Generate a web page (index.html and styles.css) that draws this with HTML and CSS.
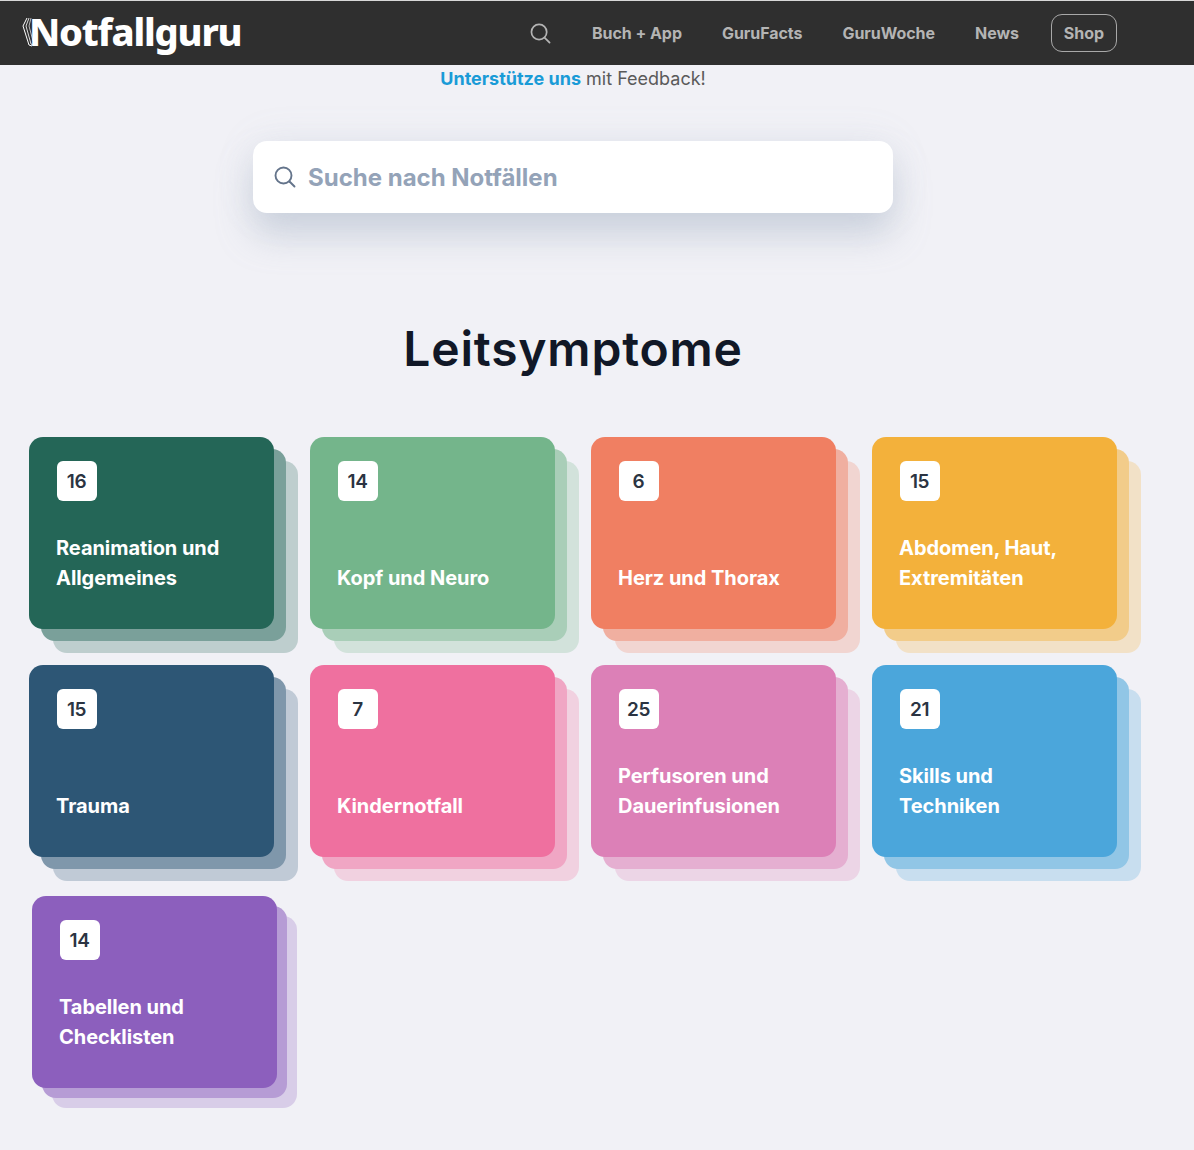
FILE: index.html
```html
<!DOCTYPE html>
<html lang="de">
<head>
    <meta charset="UTF-8">
    <meta name="viewport" content="width=device-width, initial-scale=1.0">
    <title>Notfallguru</title>
    <link rel="stylesheet" href="styles.css">
</head>
<body>
    <header class="topbar">
        <a class="logo" href="#">
            <svg class="logo-mark" width="12" height="30" viewBox="0 0 12 30">
                <path d="M5 1 L1 9 L7 28 L10 29" fill="none" stroke="#fff" stroke-width="1"/>
                <path d="M7 1 L4 9 L9 27 L11 28" fill="none" stroke="#ddd" stroke-width="1"/>
                <path d="M9 1 L7 9 L11 24" fill="none" stroke="#bbb" stroke-width="1"/>
            </svg>
            <span>Notfallguru</span>
        </a>
        <nav class="nav">
            <svg class="nav-search" width="21" height="21" viewBox="0 0 22 22" fill="none" stroke="#b4b4b4" stroke-width="1.8" stroke-linecap="round">
                <circle cx="9.5" cy="9.5" r="8"/>
                <path d="M15.5 15.5 L20.5 20.5"/>
            </svg>
            <a href="#">Buch + App</a>
            <a href="#">GuruFacts</a>
            <a href="#">GuruWoche</a>
            <a href="#">News</a>
            <a class="shop" href="#">Shop</a>
        </nav>
    </header>

    <main class="page">
        <p class="support"><a href="#">Unterstütze uns</a> mit Feedback!</p>

        <div class="search">
            <svg width="22" height="22" viewBox="0 0 22 22" fill="none" stroke="#64748b" stroke-width="1.9" stroke-linecap="round">
                <circle cx="9.5" cy="9.5" r="8"/>
                <path d="M15.5 15.5 L20.5 20.5"/>
            </svg>
            <span class="search-text">Suche nach Notfällen</span>
        </div>

        <h1>Leitsymptome</h1>

        <div class="cards">
            <a class="card green" href="#"><div class="face"><span class="count">16</span><span class="name">Reanimation und<br>Allgemeines</span></div></a>
            <a class="card mint" href="#"><div class="face"><span class="count">14</span><span class="name">Kopf und Neuro</span></div></a>
            <a class="card coral" href="#"><div class="face"><span class="count">6</span><span class="name">Herz und Thorax</span></div></a>
            <a class="card amber" href="#"><div class="face"><span class="count">15</span><span class="name">Abdomen, Haut,<br>Extremitäten</span></div></a>
            <a class="card navy" href="#"><div class="face"><span class="count">15</span><span class="name">Trauma</span></div></a>
            <a class="card pink" href="#"><div class="face"><span class="count">7</span><span class="name">Kindernotfall</span></div></a>
            <a class="card orchid" href="#"><div class="face"><span class="count">25</span><span class="name">Perfusoren und<br>Dauerinfusionen</span></div></a>
            <a class="card sky" href="#"><div class="face"><span class="count">21</span><span class="name">Skills und<br>Techniken</span></div></a>
            <a class="card purple last" href="#"><div class="face"><span class="count">14</span><span class="name">Tabellen und<br>Checklisten</span></div></a>
        </div>
    </main>
</body>
</html>
```

FILE: styles.css
```css
* {
    box-sizing: border-box;
}

body {
    font-family: "Inter", "Noto Sans", sans-serif;
    background-color: #f1f1f6;
    margin: 0;
    padding: 0;
}

a {
    text-decoration: none;
}

/* Kopfzeile */
.topbar {
    height: 65px;
    border-top: 1px solid #d8d8d8;
    background-color: #2f2f2f;
    display: flex;
    align-items: center;
    justify-content: space-between;
    padding: 0 77px 0 22px;
}

.logo {
    display: flex;
    align-items: center;
    color: white;
    font-family: "Noto Sans", sans-serif;
    font-size: 38px;
    font-weight: 800;
    letter-spacing: -1.2px;
    line-height: 44px;
    padding-bottom: 5px;
}

.logo-mark {
    margin-right: -5px;
    margin-top: 3px;
}

.nav {
    display: flex;
    align-items: center;
    gap: 40px;
}

.nav a {
    color: #b4b4b4;
    font-size: 16px;
    font-weight: 700;
    line-height: 20px;
    letter-spacing: -0.05px;
}

.nav-search {
    margin-right: 1px;
}

.nav .shop {
    margin-left: -8px;
    padding: 8px 12px;
    border: 1px solid #a8a8a8;
    border-radius: 11px;
}

/* Inhalt */
.page {
    width: 1146px;
    padding-bottom: 42px;
}

.support {
    margin: 3px 0 0;
    height: 22px;
    text-align: center;
    font-size: 18px;
    line-height: 22px;
    color: #5a5a5a;
}

.support a {
    color: #1a9bd7;
    font-weight: 700;
}

.search {
    width: 640px;
    height: 72px;
    margin: 51px auto 0;
    padding-left: 22px;
    display: flex;
    align-items: center;
    gap: 11px;
    background-color: white;
    border-radius: 14px;
    box-shadow: 0 22px 36px rgba(148, 163, 184, 0.38), 0 0 40px rgba(148, 163, 184, 0.1);
    color: #94a3b8;
    font-size: 24px;
    font-weight: 700;
}

.search svg {
    margin-left: -1px;
    margin-right: 1px;
}

.search-text {
    padding-top: 1px;
}

h1 {
    margin: 105px 0 0;
    height: 62px;
    text-align: center;
    color: #111827;
    font-size: 48px;
    font-weight: 600;
    line-height: 62px;
    letter-spacing: 0.8px;
}

/* Kacheln */
.cards {
    margin-top: 57px;
    padding-left: 29px;
    display: grid;
    grid-template-columns: repeat(4, 245px);
    grid-auto-rows: 192px;
    gap: 36px;
}

.card {
    position: relative;
    isolation: isolate;
    display: block;
    color: white;
    --step: 12px;
}

.card::before,
.card::after {
    content: "";
    position: absolute;
    z-index: -1;
    width: 100%;
    height: 100%;
    border-radius: 14px;
}

.card::before {
    top: calc(var(--step) * 2);
    left: calc(var(--step) * 2);
    background-color: color-mix(in srgb, var(--tint) 25%, #f1f1f6);
}

.card::after {
    top: var(--step);
    left: var(--step);
    background-color: color-mix(in srgb, var(--tint) 58%, #f1f1f6);
}

.face {
    height: 100%;
    padding: 24px 28px 36px;
    display: flex;
    flex-direction: column;
    justify-content: space-between;
    border-radius: 14px;
    background-color: var(--tint);
}

.count {
    width: 40px;
    height: 40px;
    padding-right: 1px;
    display: flex;
    align-items: center;
    justify-content: center;
    border-radius: 6px;
    background-color: white;
    color: #2b3442;
    font-size: 19px;
    font-weight: 600;
    letter-spacing: -0.4px;
}

.name {
    margin-left: -1px;
    font-size: 20px;
    font-weight: 700;
    line-height: 30px;
    letter-spacing: -0.05px;
}

.green { --tint: #246657; }
.mint { --tint: #74b58b; }
.coral { --tint: #f07f62; }
.amber { --tint: #f3b13b; }
.navy { --tint: #2d5675; }
.pink { --tint: #ef709f; }
.orchid { --tint: #dc80b7; }
.sky { --tint: #4ba6db; }
.purple { --tint: #8c5fbd; }

.last {
    --step: 10px;
    top: 3px;
    left: 3px;
}
```
